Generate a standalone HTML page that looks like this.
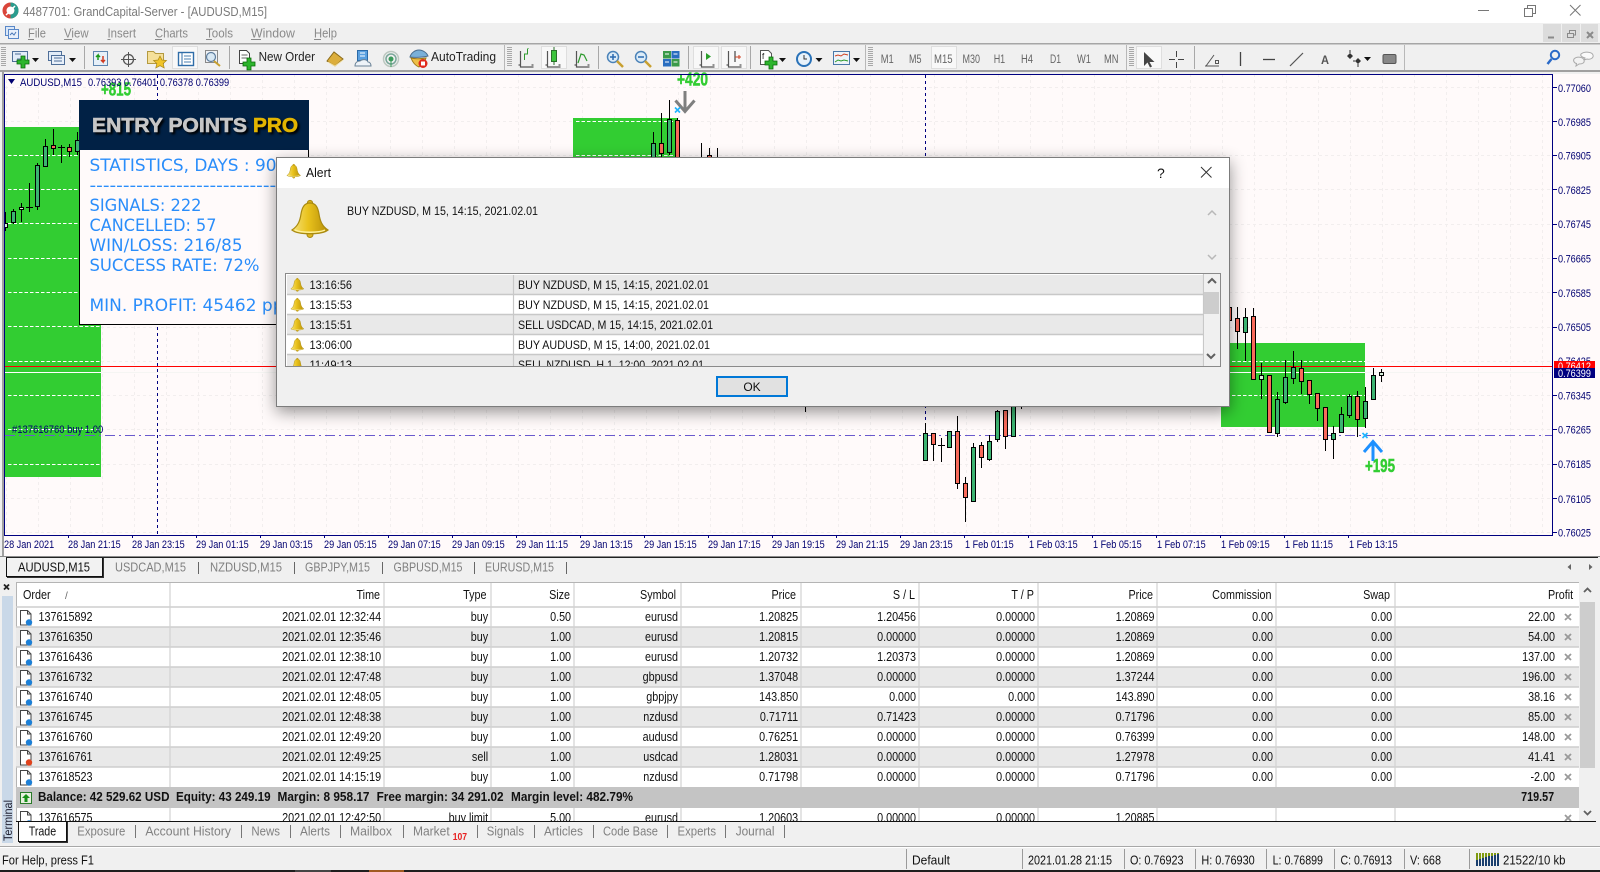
<!DOCTYPE html>
<html><head><meta charset="utf-8"><title>4487701: GrandCapital-Server - [AUDUSD,M15]</title>
<style>
html,body{margin:0;padding:0;background:#f0f0f0;width:1600px;height:872px;overflow:hidden}
svg{position:absolute;left:0;top:0;display:block}
text{font-family:"Liberation Sans",sans-serif;font-size:13px;fill:#111;white-space:pre}
.r{text-anchor:end;transform-box:fill-box;transform-origin:100% 50%;transform:scaleX(.83)}
.l{transform-box:fill-box;transform-origin:0 50%;transform:scaleX(.83)}
.ax{font-size:11px;fill:#000070;transform-box:fill-box;transform-origin:0 50%;transform:scaleX(.83)}
.m{fill:#8a8a8a}
.g{fill:#808080}
.tb{fill:#666}
.p{font-family:"DejaVu Sans",sans-serif;font-size:17px;fill:#2a8dfa}
.pf{font-weight:bold;fill:#32cd32;font-size:18px;stroke:#32cd32;stroke-width:.5px}
.d{font-size:12px;fill:#111}
.h{font-family:"Liberation Sans",sans-serif;font-weight:bold;font-size:20px;stroke-width:.6px}
</style></head>
<body>
<svg width="1600" height="872" viewBox="0 0 1600 872" xmlns="http://www.w3.org/2000/svg">
<defs>
<linearGradient id="bg" x1="0" x2="1" y1="0" y2="0"><stop offset="0" stop-color="#f6e27a"/><stop offset=".45" stop-color="#e9c21c"/><stop offset="1" stop-color="#b78f08"/></linearGradient>
<g id="bell"><circle cx="19" cy="34.5" r="3" fill="#e0b820" stroke="#a98a10"/><circle cx="19" cy="3" r="2.6" fill="#d8b018" stroke="#a98a10"/><path d="M19 3C13 3 11 8 10 14 9 21 7 26 1 30 7 35 31 35 37 30 31 26 29 21 28 14 27 8 25 3 19 3Z" fill="url(#bg)" stroke="#a98a10" stroke-width="1.2"/><path d="M4 30C10 33 28 33 34 30" stroke="#fff3a0" stroke-width="1.4" fill="none"/></g>
<g id="db"><path d="M1.5 .5h7l3.5 3.5v11h-10.500z" fill="#fff" stroke="#444"/><path d="M8.500 .5v3.500h3.500" fill="none" stroke="#444"/><circle cx="10" cy="12.500" r="3.200" fill="#1c7fd6"/></g>
<g id="dr"><path d="M1.5 .5h7l3.5 3.5v11h-10.500z" fill="#fff" stroke="#444"/><path d="M8.500 .5v3.500h3.500" fill="none" stroke="#444"/><circle cx="10" cy="12.500" r="3.200" fill="#e0421c"/></g>
<path id="plus" d="M-2 -6h4v4h4v4h-4v4h-4v-4h-4v-4h4z" fill="#2db52d" stroke="#0a6a0a" stroke-width=".8"/>
<path id="dn" d="M0 0h7l-3.500 4z" fill="#111"/>
<g id="grip"><path d="M0 47.500h5M0 49.500h5M0 51.500h5M0 53.500h5M0 55.500h5M0 57.500h5M0 59.500h5M0 61.500h5M0 63.500h5M0 65.500h5" stroke="#a8a8a8" stroke-width="1"/></g>
<g id="axs"><path d="M0 -8V8H13M-2 6H0M13 6h-2" stroke="#555" fill="none" stroke-width="1.200"/></g>
<pattern id="gv" x="38" y="74" width="32" height="6" patternUnits="userSpaceOnUse"><rect width="1" height="3" fill="#f2eeee"/></pattern>
<filter id="sh" x="-5%" y="-15%" width="110%" height="135%"><feDropShadow dx="0" dy="5" stdDeviation="8" flood-color="#000" flood-opacity=".42"/></filter>
<clipPath id="cc"><rect x="5" y="75" width="1548" height="460"/></clipPath>
<clipPath id="ct"><rect x="16" y="582" width="1563" height="239"/></clipPath>
<clipPath id="cl"><rect x="286" y="274" width="917" height="92"/></clipPath>
<clipPath id="cn"><rect x="1554" y="340" width="46" height="28"/></clipPath>
</defs>

<!-- title bar -->
<rect width="1600" height="23" fill="#fff"/>
<circle cx="10.500" cy="10.500" r="6" fill="none" stroke="#d9453a" stroke-width="4"/>
<path d="M10.500 4.500A6 6 0 0 1 10.500 16.500" fill="none" stroke="#2a9d8f" stroke-width="4"/>
<path d="M6 15L15 6" stroke="#fff" stroke-width="1.500"/>
<text x="23" y="16" textLength="244" lengthAdjust="spacingAndGlyphs" style="fill:#7a7a7a">4487701: GrandCapital-Server - [AUDUSD,M15]</text>
<path d="M1478 10.500H1489" stroke="#777"/>
<path d="M1524.500 8.500h8v8h-8zM1527.500 8.500v-3h8v8h-3" fill="none" stroke="#777"/>
<path d="M1570 5l10.500 10.500M1580.500 5L1570 15.500" stroke="#777"/>

<!-- menu -->
<rect y="23" width="1600" height="20" fill="#f0f0f0"/>
<rect x="5.500" y="26.500" width="9" height="9" fill="#dbe8f8" stroke="#5a88c8"/><rect x="8.500" y="29.500" width="10" height="9" fill="#e8f0fb" stroke="#5a88c8"/><path d="M10 35l2-2 2 2 2-3" stroke="#4a78b8" fill="none"/>
<text class="m" x="28" y="37.500" textLength="18" lengthAdjust="spacingAndGlyphs">File</text>
<text class="m" x="64" y="37.500" textLength="24.600" lengthAdjust="spacingAndGlyphs">View</text>
<text class="m" x="107.500" y="37.500" textLength="28.500" lengthAdjust="spacingAndGlyphs">Insert</text>
<text class="m" x="155" y="37.500" textLength="33" lengthAdjust="spacingAndGlyphs">Charts</text>
<text class="m" x="206" y="37.500" textLength="27" lengthAdjust="spacingAndGlyphs">Tools</text>
<text class="m" x="251" y="37.500" textLength="44" lengthAdjust="spacingAndGlyphs">Window</text>
<text class="m" x="314" y="37.500" textLength="23" lengthAdjust="spacingAndGlyphs">Help</text>
<path d="M28 39.500h6M64 39.500h8M107.500 39.500h3M155 39.500h7M206 39.500h6M251 39.500h10M314 39.500h7" stroke="#8a8a8a"/>
<rect x="1543" y="24" width="18" height="18" fill="#dcdcdc"/><rect x="1562" y="24" width="18" height="18" fill="#dcdcdc"/><rect x="1581" y="24" width="17" height="18" fill="#dcdcdc"/>
<path d="M1548 37.500h6" stroke="#8a8a8a" stroke-width="2"/>
<path d="M1567.500 33.500h6v4h-6zM1569.500 33v-2.500h6v4.500h-2" fill="none" stroke="#8a8a8a"/>
<path d="M1587 32l6 6M1593 32l-6 6" stroke="#8a8a8a" stroke-width="2"/>

<!-- toolbar -->
<rect y="43" width="1600" height="31" fill="#f0f0f0"/>
<rect y="43" width="1600" height="1.500" fill="#a6a6a6"/>
<rect y="70" width="1600" height="2" fill="#a0a0a0"/>
<use href="#grip" x="1"/><use href="#grip" x="507"/><use href="#grip" x="868"/><use href="#grip" x="1129"/>
<path d="M84.500 46v23M229.500 46v23M598.500 46v23M688.500 46v23M750.500 46v23M1194.500 46v23" stroke="#a8a8a8"/>
<path d="M504.500 45v25M865.500 45v25M1126.500 45v25M1404.500 45v25" stroke="#b8b8b8"/>
<!-- active buttons -->
<g fill="#f8f8f8" stroke="#dedede"><rect x="172.500" y="46.500" width="25" height="22"/><rect x="541.500" y="46.500" width="25" height="22"/><rect x="693.500" y="46.500" width="25" height="22"/><rect x="721.500" y="46.500" width="25" height="22"/><rect x="931.500" y="46.500" width="25" height="22"/><rect x="1136.500" y="46.500" width="25" height="22"/></g>
<!-- new chart -->
<rect x="12.500" y="51.500" width="15" height="10" fill="#e2ecf8" stroke="#4e6e98"/><path d="M15 54h6M17 59h7" stroke="#4e6e98"/><use href="#plus" x="23" y="62"/><use href="#dn" x="32" y="58"/>
<rect x="48.500" y="51.500" width="13" height="9" fill="#e2ecf8" stroke="#4e6e98"/><rect x="51.500" y="55.500" width="13" height="9" fill="#e8f0fa" stroke="#4e6e98"/><path d="M54 58h8M54 61h8" stroke="#4e6e98"/><use href="#dn" x="69" y="58"/>
<!-- market watch -->
<rect x="93.500" y="51.500" width="14" height="14" fill="#e6eff8" stroke="#5e86b0"/><path d="M98 60v-5l-2 2M98 55l2 2" stroke="#1a9a1a" stroke-width="1.500" fill="none"/><path d="M103 56v6l-2-2M103 62l2-2" stroke="#d03a20" stroke-width="1.500" fill="none"/>
<!-- crosshair -->
<circle cx="128.500" cy="59.500" r="5" fill="none" stroke="#555" stroke-width="1.300"/><path d="M128.500 52v15M121 59.500h15" stroke="#555"/>
<!-- folder star -->
<path d="M147.500 51.500h6l2 2h8v10h-16z" fill="#f5e09a" stroke="#b49a40"/><path d="M160 56l2 4 4.500.5-3.300 3 1 4.500-4.200-2.300-4.200 2.300 1-4.500-3.300-3 4.500-.5z" fill="#f0c428" stroke="#a8861a" stroke-width=".7"/>
<!-- navigator -->
<rect x="178.500" y="52.500" width="15" height="13" fill="#fff" stroke="#2f6da8" stroke-width="1.400"/><path d="M182 52v13" stroke="#2f6da8"/><path d="M184 56h7M184 59h7M184 62h7" stroke="#4a7fb0"/>
<!-- tester -->
<rect x="205.500" y="50.500" width="12" height="12" fill="#eef1f5" stroke="#8a8a8a"/><circle cx="211" cy="57" r="4.500" fill="#d8e8f4" stroke="#5e7e9e" stroke-width="1.200"/><path d="M214 61l6 5" stroke="#c8a030" stroke-width="2"/>
<!-- new order -->
<path d="M239.500 50.500h7l3 3v10h-10z" fill="#fff" stroke="#444"/><path d="M241.500 55h6M241.500 58h6" stroke="#666"/><use href="#plus" x="249" y="64"/>
<text x="258.600" y="61" textLength="56.400" lengthAdjust="spacingAndGlyphs" style="fill:#222">New Order</text>
<!-- gold -->
<path d="M327 61l7-9 9 7-8 7z" fill="#dcae3c" stroke="#8a6a18"/><path d="M328 62l7 4 8-6" stroke="#f4e0a0" fill="none"/>
<!-- library -->
<path d="M357.500 50.500h10v10h-10z" fill="#5aa0e0" stroke="#2a6aa8"/><path d="M360 53h5M360 56h5" stroke="#fff"/><path d="M355 66c0-4 3-5 5-5 2-2 7-2 8 1 2 0 3 2 3 4z" fill="#eef3f8" stroke="#6a8296"/>
<!-- radio -->
<circle cx="391" cy="59" r="7.500" fill="none" stroke="#bcc8c0" stroke-width="1.500"/><circle cx="391" cy="59" r="5" fill="none" stroke="#7aa69a" stroke-width="1.500"/><circle cx="391" cy="59" r="2.500" fill="#3a9a5a"/><path d="M391 59v8" stroke="#3a9a5a"/>
<!-- autotrading -->
<path d="M410 57c1-4 5-7 9-7s8 3 9 6c-3 1-14 2-18 1z" fill="#7ab0d8" stroke="#4a6e90"/><path d="M411 58c2 5 5 8 8 9l5-4 2-5c-6 1-11 1-15 0z" fill="#eec048" stroke="#a07a18"/><circle cx="423" cy="63.500" r="4.500" fill="#e02a1c"/><rect x="421" y="61.500" width="4" height="4" fill="#fff"/>
<text x="431" y="61" textLength="65" lengthAdjust="spacingAndGlyphs" style="fill:#222">AutoTrading</text>
<!-- chart type -->
<use href="#axs" x="520.500" y="59"/><path d="M524.500 60v-6h3v-5" stroke="#2e9a2e" fill="none"/><path d="M528 49v-1" stroke="#2e9a2e"/>
<use href="#axs" x="547.500" y="59"/><rect x="551.500" y="50.500" width="5" height="11" fill="#3cc43c" stroke="#2a702a"/><path d="M554 47v3M554 62v3" stroke="#2a702a"/>
<use href="#axs" x="576.500" y="59"/><path d="M578 63l3-9 3 1 3 6" stroke="#2e9a2e" fill="none" stroke-width="1.200"/>
<!-- zoom -->
<circle cx="613" cy="57" r="5.500" fill="#dcecf8" stroke="#4a82b8" stroke-width="1.500"/><path d="M610 57h6M613 54v6" stroke="#2a6ab0" stroke-width="1.500"/><path d="M617 61l6 6" stroke="#c8a030" stroke-width="2.500"/>
<circle cx="641" cy="57" r="5.500" fill="#dcecf8" stroke="#4a82b8" stroke-width="1.500"/><path d="M638 57h6" stroke="#2a6ab0" stroke-width="1.500"/><path d="M645 61l6 6" stroke="#c8a030" stroke-width="2.500"/>
<rect x="663" y="51" width="8" height="7.500" fill="#3a9a4a"/><rect x="671.500" y="51" width="8" height="7.500" fill="#2a6ec0"/><rect x="663" y="59" width="8" height="7.500" fill="#2a6ec0"/><rect x="671.500" y="59" width="8" height="7.500" fill="#3a9a4a"/><path d="M665 54h4M673.500 54h4M665 62h4M673.500 62h4" stroke="#fff"/>
<use href="#axs" x="701.500" y="59"/><path d="M706 53v7l5-3.500z" fill="#2aa02a"/>
<use href="#axs" x="728.500" y="59"/><path d="M735 51v11" stroke="#222"/><path d="M735 57h6M739 55v4" stroke="#d04020"/>
<!-- indicators -->
<path d="M760.500 50.500h8l3 3v11h-11z" fill="#fff" stroke="#555"/><text x="762" y="59" style="font-size:8px">f</text><use href="#plus" x="771" y="63"/><use href="#dn" x="779" y="58"/>
<circle cx="804" cy="59" r="7" fill="#e8f2fa" stroke="#2a72b8" stroke-width="2"/><path d="M804 55v4h3" stroke="#333" fill="none"/><use href="#dn" x="815.500" y="58"/>
<rect x="833.500" y="51.500" width="16" height="13" fill="#eef4fa" stroke="#4a78a8"/><path d="M835 56l3-1 3 1 3-2 4 1" stroke="#d04020" fill="none"/><path d="M835 62l3-2 3 1 3-1 4 1" stroke="#2a9a2a" fill="none"/><use href="#dn" x="853" y="58"/>
<g class="tb">
<text class="tb" x="880.700" y="63" textLength="13" lengthAdjust="spacingAndGlyphs" style="font-size:11.500px">M1</text>
<text class="tb" x="909" y="63" textLength="12.500" lengthAdjust="spacingAndGlyphs" style="font-size:11.500px">M5</text>
<text class="tb" x="934" y="63" textLength="18.600" lengthAdjust="spacingAndGlyphs" style="font-size:11.500px">M15</text>
<text class="tb" x="962.500" y="63" textLength="17.500" lengthAdjust="spacingAndGlyphs" style="font-size:11.500px">M30</text>
<text class="tb" x="993.700" y="63" textLength="11.500" lengthAdjust="spacingAndGlyphs" style="font-size:11.500px">H1</text>
<text class="tb" x="1021" y="63" textLength="12" lengthAdjust="spacingAndGlyphs" style="font-size:11.500px">H4</text>
<text class="tb" x="1050" y="63" textLength="11" lengthAdjust="spacingAndGlyphs" style="font-size:11.500px">D1</text>
<text class="tb" x="1077" y="63" textLength="14" lengthAdjust="spacingAndGlyphs" style="font-size:11.500px">W1</text>
<text class="tb" x="1104" y="63" textLength="14.500" lengthAdjust="spacingAndGlyphs" style="font-size:11.500px">MN</text>
</g>
<path d="M1144 52v14l3.500-3.500 2.500 5 2-1-2.500-4.500h5z" fill="#444"/>
<path d="M1176.500 51v6M1176.500 62v6M1169 59.500h6M1178 59.500h6" stroke="#444"/>
<path d="M1205 66h14M1206 66l8-11" stroke="#555" fill="none"/><rect x="1215.500" y="60.500" width="3" height="3" fill="none" stroke="#555"/>
<path d="M1240.500 52v14" stroke="#444" stroke-width="1.300"/>
<path d="M1263 59.500h12" stroke="#444" stroke-width="1.300"/>
<path d="M1290 66l13-13" stroke="#555" stroke-width="1.200"/>
<text x="1321" y="64" textLength="8" lengthAdjust="spacingAndGlyphs" style="font-weight:bold;fill:#555;font-size:12px">A</text>
<path d="M1350 53l3 3-3 3-3-3zM1358 58l3 3-3 3-3-3z" fill="#333"/><path d="M1350 50v3M1358 64v3M1353 61h2" stroke="#333"/><use href="#dn" x="1364" y="57"/>
<rect x="1383" y="54.500" width="13" height="9" rx="1.500" fill="#888" stroke="#555"/>
<circle cx="1555" cy="55" r="4.200" fill="none" stroke="#2a6ac8" stroke-width="2"/><path d="M1551.500 59l-4 5" stroke="#2a6ac8" stroke-width="2.500"/>
<path d="M1581 54c4-3 11-2 12 1 1 3-3 5-6 4l-3 1 1-2c-3-1-5-2-4-4z" fill="#fafafa" stroke="#aaa"/><path d="M1574 59c3-3 9-2 10 1 1 3-2 4-5 4l-3 2 .5-2.500c-2.500-.5-3.500-3-2.500-4.500z" fill="#f2f2f2" stroke="#aaa"/>

<!-- chart frame -->
<rect x="2" y="72" width="2" height="484" fill="#a0a0a0"/>
<rect x="4" y="74" width="1596" height="482" fill="#fffafa"/>
<rect x="5" y="75" width="1548" height="460" fill="url(#gv)"/>
<path d="M5 87.500H1553M5 121.500H1553M5 155.500H1553M5 189.500H1553M5 224.500H1553M5 258.500H1553M5 292.500H1553M5 327.500H1553M5 361.500H1553M5 395.500H1553M5 429.500H1553M5 464.500H1553M5 498.500H1553M5 532.500H1553" stroke="#f2eeee" stroke-dasharray="3 3"/>
<!-- green zones -->
<rect x="5" y="127" width="96" height="350" fill="#32cd32"/>
<rect x="573" y="118" width="104" height="60" fill="#32cd32"/>
<rect x="1221" y="343" width="144" height="84" fill="#32cd32"/>
<path d="M8 155.500H101M8 189.500H101M8 223.500H101M8 258.500H101M8 292.500H101M8 326.500H101M8 361.500H101M8 395.500H101M8 429.500H101M8 464.500H101M576 121.500H677M576 155.500H677M1221 361.500H1365M1221 395.500H1365" stroke="#fff" stroke-dasharray="3.500 2" fill="none"/>
<path d="M5 372.500H1553" stroke="#f5f5f3"/><path d="M5 372.500H101M1221 372.500H1365" stroke="#fff"/>
<!-- verticals -->
<path d="M157.500 75V535M925.500 75V423" stroke="#000080" stroke-dasharray="3 3"/>
<path d="M5 435.500H1553" stroke="#6a5acd" stroke-dasharray="10 4 2 4"/>
<path d="M5 366.500H1553" stroke="#f00"/>

<!-- candles -->
<g clip-path="url(#cc)">
<path stroke="#000" fill="none" d="M5.500 212V231M13.500 209V224M21.500 203V222M29.500 183V212M37.500 163V210M45.500 139V167M53.500 129V155M61.500 145V163M69.500 144V157M77.500 132V155M653.500 132V170M661.500 113V170M669.500 100V155M677.500 118V170M701.500 143V170M709.500 148V170M717.500 148V170M805.500 400V412M925.500 423V460M933.500 433V461M941.500 438V462M949.500 431V448M957.500 416V489M965.500 477V522M973.500 443V501M981.500 442V468M989.500 435V461M997.500 410V442M1005.500 410V449M1013.500 400V436M1021.500 400V409M1229.500 296V320M1237.500 307V349M1245.500 308V361M1253.500 308V380M1261.500 363V399M1269.500 375V433M1277.500 392V437M1285.500 360V404M1293.500 351V384M1301.500 360V394M1309.500 380V404M1317.500 393V421M1325.500 407V451M1333.500 426V459M1341.500 407V432M1349.500 394V418M1357.500 391V437M1365.500 387V428M1373.500 368V399M1381.500 369V382"/>
<path stroke="#000" fill="#3cb371" d="M11.500 211.500h4v11h-4zM35.500 165.500h4v41h-4zM43.500 146.500h4v20h-4zM75.500 140.500h4v11h-4zM651.500 143.500h4v30h-4zM667.500 119.500h4v33h-4zM923.500 433.500h4v27h-4zM947.500 431.500h4v16h-4zM971.500 447.500h4v54h-4zM987.500 441.500h4v18h-4zM995.500 411.500h4v28h-4zM1011.500 400.500h4v36h-4zM1243.500 317.500h4v15h-4zM1275.500 399.500h4v34h-4zM1283.500 377.500h4v25h-4zM1291.500 367.500h4v11h-4zM1331.500 433.500h4v6h-4zM1339.500 414.500h4v18h-4zM1347.500 396.500h4v19h-4zM1363.500 401.500h4v17h-4zM1371.500 375.500h4v24h-4z"/>
<path stroke="#000" fill="#f86a5a" d="M51.500 145.500h4v3h-4zM67.500 147.500h4v4h-4zM659.500 143.500h4v10h-4zM675.500 120.500h4v50h-4zM707.500 155.500h4v15h-4zM931.500 433.500h4v11h-4zM955.500 431.500h4v52h-4zM963.500 483.500h4v14h-4zM979.500 445.500h4v12h-4zM1003.500 410.500h4v26h-4zM1227.500 307.500h4v13h-4zM1235.500 318.500h4v13h-4zM1251.500 316.500h4v63h-4zM1267.500 375.500h4v57h-4zM1299.500 368.500h4v13h-4zM1307.500 380.500h4v14h-4zM1315.500 393.500h4v15h-4zM1323.500 407.500h4v32h-4zM1355.500 396.500h4v23h-4z"/>
<path stroke="#000" fill="#d8f0dc" d="M3.500 223.500h4v4h-4zM19.500 207.500h4v2h-4zM1259.500 375.500h4v4h-4zM1379.500 372.500h4v3h-4z"/>
<path stroke="#000" d="M26 207.500h7M58 147.500h7M938 445.500h7"/>
</g>

<!-- signal marks -->
<path d="M685 91V111M675.500 100.500L685 111.500 694.500 100.500" fill="none" stroke="#7f7f7f" stroke-width="3"/>
<path d="M675 107.500l5 5M680 107.500l-5 5" stroke="#1eb4ff" stroke-width="1.600"/>
<text class="pf" x="677" y="85.500" textLength="31" lengthAdjust="spacingAndGlyphs">+420</text>
<text class="pf" x="101" y="95.500" textLength="30" lengthAdjust="spacingAndGlyphs">+815</text>
<path d="M1373 461V442M1364 452L1373 441.500 1382 452" fill="none" stroke="#1e90ff" stroke-width="3"/>
<path d="M1362.500 433l5 5M1367.500 433l-5 5" stroke="#1eb4ff" stroke-width="1.600"/>
<text class="pf" x="1365" y="472" textLength="30" lengthAdjust="spacingAndGlyphs">+195</text>

<!-- chart text -->
<path d="M8 79h7l-3.500 5z" fill="#000070"/>
<text x="20" y="86" textLength="62" lengthAdjust="spacingAndGlyphs" style="font-size:11px;fill:#000070">AUDUSD,M15</text>
<text class="ax" x="88" y="86" textLength="170" lengthAdjust="spacingAndGlyphs">0.76393 0.76401 0.76378 0.76399</text>
<text class="ax" x="12" y="433" textLength="110" lengthAdjust="spacingAndGlyphs">#137616760 buy 1.00</text>

<!-- axes -->
<path d="M4.500 74V535M4 74.500H1553M1552.500 74V535M4 535.500H1553" fill="none" stroke="#000080"/>
<path d="M1553 87.500h4M1553 121.500h4M1553 155.500h4M1553 189.500h4M1553 224.500h4M1553 258.500h4M1553 292.500h4M1553 327.500h4M1553 395.500h4M1553 429.500h4M1553 464.500h4M1553 498.500h4M1553 532.500h4M68.500 535v3M132.500 535v3M196.500 535v3M260.500 535v3M324.500 535v3M388.500 535v3M452.500 535v3M516.500 535v3M580.500 535v3M644.500 535v3M708.500 535v3M772.500 535v3M836.500 535v3M900.500 535v3M964.500 535v3M1028.500 535v3M1092.500 535v3M1156.500 535v3M1220.500 535v3M1284.500 535v3M1348.500 535v3" stroke="#000080"/>
<text class="ax" x="1558" y="92">0.77060</text><text class="ax" x="1558" y="126">0.76985</text><text class="ax" x="1558" y="159.500">0.76905</text><text class="ax" x="1558" y="194">0.76825</text><text class="ax" x="1558" y="228">0.76745</text><text class="ax" x="1558" y="262.500">0.76665</text><text class="ax" x="1558" y="297">0.76585</text><text class="ax" x="1558" y="331">0.76505</text><text class="ax" x="1558" y="365">0.76425</text><text class="ax" x="1558" y="399.500">0.76345</text><text class="ax" x="1558" y="433.500">0.76265</text><text class="ax" x="1558" y="468">0.76185</text><text class="ax" x="1558" y="503">0.76105</text><text class="ax" x="1558" y="536.500">0.76025</text>
<rect x="1554" y="361" width="41" height="8" fill="#f00"/>
<g clip-path="url(#cn)"><text class="ax" x="1558" y="370" style="fill:#fff">0.76412</text></g>
<rect x="1554" y="368" width="41" height="10" fill="#000080"/>
<text class="ax" x="1558" y="377" style="fill:#fff">0.76399</text>
<g>
<text class="ax" x="4" y="548">28 Jan 2021</text><text class="ax" x="68" y="548">28 Jan 21:15</text><text class="ax" x="132" y="548">28 Jan 23:15</text><text class="ax" x="196" y="548">29 Jan 01:15</text><text class="ax" x="260" y="548">29 Jan 03:15</text><text class="ax" x="324" y="548">29 Jan 05:15</text><text class="ax" x="388" y="548">29 Jan 07:15</text><text class="ax" x="452" y="548">29 Jan 09:15</text><text class="ax" x="516" y="548">29 Jan 11:15</text><text class="ax" x="580" y="548">29 Jan 13:15</text><text class="ax" x="644" y="548">29 Jan 15:15</text><text class="ax" x="708" y="548">29 Jan 17:15</text><text class="ax" x="772" y="548">29 Jan 19:15</text><text class="ax" x="836" y="548">29 Jan 21:15</text><text class="ax" x="900" y="548">29 Jan 23:15</text><text class="ax" x="965" y="548">1 Feb 01:15</text><text class="ax" x="1029" y="548">1 Feb 03:15</text><text class="ax" x="1093" y="548">1 Feb 05:15</text><text class="ax" x="1157" y="548">1 Feb 07:15</text><text class="ax" x="1221" y="548">1 Feb 09:15</text><text class="ax" x="1285" y="548">1 Feb 11:15</text><text class="ax" x="1349" y="548">1 Feb 13:15</text>
</g>

<!-- entry points panel -->
<rect x="79.500" y="100.500" width="229" height="224" fill="#fffafa" stroke="#000"/>
<rect x="79" y="100" width="230" height="50" fill="#012145"/>
<text class="h" x="92" y="132" textLength="155" lengthAdjust="spacingAndGlyphs" style="fill:#c6c6c6;stroke:#c6c6c6;filter:drop-shadow(2px 2px 1px #000)">ENTRY POINTS</text>
<text class="h" x="253" y="132" textLength="45" lengthAdjust="spacingAndGlyphs" style="fill:#e2b400;stroke:#e2b400;filter:drop-shadow(2px 2px 1px #000)">PRO</text>
<text class="p" x="89.500" y="171" textLength="187" lengthAdjust="spacingAndGlyphs">STATISTICS, DAYS : 90</text>
<text class="p" x="89.500" y="191" textLength="200" lengthAdjust="spacingAndGlyphs">------------------------------</text>
<text class="p" x="89.500" y="211" textLength="112" lengthAdjust="spacingAndGlyphs">SIGNALS: 222</text>
<text class="p" x="89.500" y="231" textLength="127" lengthAdjust="spacingAndGlyphs">CANCELLED: 57</text>
<text class="p" x="89.500" y="251" textLength="153" lengthAdjust="spacingAndGlyphs">WIN/LOSS: 216/85</text>
<text class="p" x="89.500" y="271" textLength="170" lengthAdjust="spacingAndGlyphs">SUCCESS RATE: 72%</text>
<text class="p" x="89.500" y="311" textLength="194" lengthAdjust="spacingAndGlyphs">MIN. PROFIT: 45462 pp</text>

<!-- alert dialog -->
<rect x="276.500" y="157.500" width="953" height="249" fill="#f0f0f0" stroke="#7c7c7c" filter="url(#sh)"/>
<rect x="277" y="158" width="952" height="30" fill="#fff"/>
<use href="#bell" transform="translate(286.500 164) scale(.38)"/>
<text x="306" y="177" textLength="25" lengthAdjust="spacingAndGlyphs">Alert</text>
<text x="1157" y="178" style="font-size:14px">?</text>
<path d="M1201 167l10.500 10.500M1211.500 167L1201 177.500" stroke="#333"/>
<use href="#bell" x="291" y="200"/>
<text class="d" x="347" y="215" textLength="191" lengthAdjust="spacingAndGlyphs">BUY NZDUSD, M 15, 14:15, 2021.02.01</text>
<path d="M1208 215l4-4 4 4M1208 255l4 4 4-4" fill="none" stroke="#b8b8b8" stroke-width="1.500"/>
<!-- list -->
<rect x="285.500" y="273.500" width="935" height="93" fill="#fff" stroke="#8a8a8a"/>
<rect x="287" y="275" width="916" height="19" fill="#e9e9e9"/><rect x="287" y="315" width="916" height="19" fill="#e9e9e9"/><rect x="287" y="355" width="916" height="11" fill="#e9e9e9"/>
<path d="M287 294.500H1203M287 314.500H1203M287 334.500H1203M287 354.500H1203" stroke="#c8c8c8" stroke-width="1.500"/>
<path d="M513.500 275V366M1203.500 274V366" stroke="#c8c8c8" stroke-width="1.200"/>
<rect x="1204" y="274" width="16" height="92" fill="#f0f0f0"/>
<rect x="1204" y="292" width="15" height="22" fill="#cdcdcd"/>
<path d="M1208 283l4-4 4 4M1207 354l4 4 4-4" fill="none" stroke="#606060" stroke-width="2"/>
<g clip-path="url(#cl)">
<use href="#bell" transform="translate(290.500 278) scale(.36)"/><use href="#bell" transform="translate(290.500 298) scale(.36)"/><use href="#bell" transform="translate(290.500 318) scale(.36)"/><use href="#bell" transform="translate(290.500 338) scale(.36)"/><use href="#bell" transform="translate(290.500 358) scale(.36)"/>
<text class="d" x="309.500" y="289" textLength="42.500" lengthAdjust="spacingAndGlyphs">13:16:56</text>
<text class="d" x="309.500" y="309" textLength="42.500" lengthAdjust="spacingAndGlyphs">13:15:53</text>
<text class="d" x="309.500" y="329" textLength="42.500" lengthAdjust="spacingAndGlyphs">13:15:51</text>
<text class="d" x="309.500" y="349" textLength="42.500" lengthAdjust="spacingAndGlyphs">13:06:00</text>
<text class="d" x="309.500" y="369" textLength="42.500" lengthAdjust="spacingAndGlyphs">11:49:13</text>
<text class="d" x="518" y="289" textLength="191" lengthAdjust="spacingAndGlyphs">BUY NZDUSD, M 15, 14:15, 2021.02.01</text>
<text class="d" x="518" y="309" textLength="191" lengthAdjust="spacingAndGlyphs">BUY NZDUSD, M 15, 14:15, 2021.02.01</text>
<text class="d" x="518" y="329" textLength="195" lengthAdjust="spacingAndGlyphs">SELL USDCAD, M 15, 14:15, 2021.02.01</text>
<text class="d" x="518" y="349" textLength="192" lengthAdjust="spacingAndGlyphs">BUY AUDUSD, M 15, 14:00, 2021.02.01</text>
<text class="d" x="518" y="369" textLength="186" lengthAdjust="spacingAndGlyphs">SELL NZDUSD, H 1, 12:00, 2021.02.01</text>
</g>
<rect x="717" y="377" width="70" height="19" fill="#e1e1e1" stroke="#0078d7" stroke-width="2"/>
<text class="d" x="752" y="391" text-anchor="middle">OK</text>

<!-- chart tabs -->
<rect y="556" width="1600" height="1.500" fill="#8c8c8c"/>
<rect y="557" width="1600" height="25" fill="#f0f0f0"/>
<path d="M6 557.500H1598" stroke="#222"/>
<path d="M6.500 558V576.500H102.500V558" fill="#f2f2f2" stroke="#111"/><path d="M7 577.500H103.500V558" fill="none" stroke="#333"/>
<text x="18" y="571.500" textLength="72" lengthAdjust="spacingAndGlyphs">AUDUSD,M15</text>
<g class="g">
<text class="g" x="115" y="571.500" textLength="71" lengthAdjust="spacingAndGlyphs">USDCAD,M15</text>
<text class="g" x="210" y="571.500" textLength="72" lengthAdjust="spacingAndGlyphs">NZDUSD,M15</text>
<text class="g" x="305" y="571.500" textLength="65" lengthAdjust="spacingAndGlyphs">GBPJPY,M15</text>
<text class="g" x="393.500" y="571.500" textLength="69" lengthAdjust="spacingAndGlyphs">GBPUSD,M15</text>
<text class="g" x="485" y="571.500" textLength="69" lengthAdjust="spacingAndGlyphs">EURUSD,M15</text>
</g>
<path d="M198.500 562v12M294.500 562v12M382.500 562v12M474.500 562v12M566.500 562v12" stroke="#666"/>
<path d="M1571 564v6l-3.500-3zM1589 564v6l3.500-3z" fill="#666"/>

<!-- terminal -->
<rect y="578" width="16" height="270" fill="#f0f0f0"/>
<path d="M4 584.500l5 5M9 584.500l-5 5" stroke="#222" stroke-width="1.800"/>
<rect x="2" y="596" width="11" height="247" fill="#c9d8e8"/>
<text transform="translate(12 841) rotate(-90)" textLength="41" lengthAdjust="spacingAndGlyphs" style="font-size:12px;fill:#223">Terminal</text>

<!-- table -->
<rect x="16" y="582" width="1563" height="239" fill="#fff"/>
<path d="M16 582.500H1579" stroke="#b4b4b4"/><path d="M16.500 582V821" stroke="#b4b4b4"/>
<rect x="16" y="627" width="1563" height="20" fill="#e9e9e9"/><rect x="16" y="667" width="1563" height="20" fill="#e9e9e9"/><rect x="16" y="707" width="1563" height="20" fill="#e9e9e9"/><rect x="16" y="747" width="1563" height="20" fill="#e9e9e9"/>
<path d="M16 607H1579M16 627H1579M16 647H1579M16 667H1579M16 687H1579M16 707H1579M16 727H1579M16 747H1579M16 767H1579" stroke="#cecece" stroke-width="1.500"/>
<path d="M170 583V787M384 583V787M491 583V787M574 583V787M681 583V787M801 583V787M919 583V787M1038 583V787M1157 583V787M1276 583V787M1395 583V787M170 808V821M384 808V821M491 808V821M574 808V821M681 808V821M801 808V821M919 808V821M1038 808V821M1157 808V821M1276 808V821M1395 808V821" stroke="#d2d2d2" stroke-width="1.200"/>
<rect x="16" y="787" width="1563" height="21" fill="#c4c4c4"/>
<text class="l" x="23" y="599">Order</text><text x="65" y="599" style="font-size:10px;fill:#666">/</text>
<text class="r" x="380" y="599">Time</text><text class="r" x="486.500" y="599">Type</text><text class="r" x="570" y="599">Size</text><text class="r" x="676" y="599">Symbol</text><text class="r" x="796" y="599">Price</text><text class="r" x="915" y="599">S / L</text><text class="r" x="1034" y="599">T / P</text><text class="r" x="1153" y="599">Price</text><text class="r" x="1271.500" y="599">Commission</text><text class="r" x="1390" y="599">Swap</text><text class="r" x="1573" y="599">Profit</text>
<g clip-path="url(#ct)">
<use href="#db" x="19" y="610"/><use href="#db" x="19" y="630"/><use href="#db" x="19" y="650"/><use href="#db" x="19" y="670"/><use href="#db" x="19" y="690"/><use href="#db" x="19" y="710"/><use href="#db" x="19" y="730"/><use href="#dr" x="19" y="750"/><use href="#db" x="19" y="770"/><use href="#db" x="19" y="811"/>
<text class="l" y="621"><tspan x="38.500">137615892</tspan><tspan x="38.500" dy="20">137616350</tspan><tspan x="38.500" dy="20">137616436</tspan><tspan x="38.500" dy="20">137616732</tspan><tspan x="38.500" dy="20">137616740</tspan><tspan x="38.500" dy="20">137616745</tspan><tspan x="38.500" dy="20">137616760</tspan><tspan x="38.500" dy="20">137616761</tspan><tspan x="38.500" dy="20">137618523</tspan><tspan x="38.500" dy="41">137616575</tspan></text>
<text class="r" y="621"><tspan x="381">2021.02.01 12:32:44</tspan><tspan x="381" dy="20">2021.02.01 12:35:46</tspan><tspan x="381" dy="20">2021.02.01 12:38:10</tspan><tspan x="381" dy="20">2021.02.01 12:47:48</tspan><tspan x="381" dy="20">2021.02.01 12:48:05</tspan><tspan x="381" dy="20">2021.02.01 12:48:38</tspan><tspan x="381" dy="20">2021.02.01 12:49:20</tspan><tspan x="381" dy="20">2021.02.01 12:49:25</tspan><tspan x="381" dy="20">2021.02.01 14:15:19</tspan><tspan x="381" dy="41">2021.02.01 12:42:50</tspan></text>
<text class="r" y="621"><tspan x="488">buy</tspan><tspan x="488" dy="20">buy</tspan><tspan x="488" dy="20">buy</tspan><tspan x="488" dy="20">buy</tspan><tspan x="488" dy="20">buy</tspan><tspan x="488" dy="20">buy</tspan><tspan x="488" dy="20">buy</tspan><tspan x="488" dy="20">sell</tspan><tspan x="488" dy="20">buy</tspan><tspan x="488" dy="41">buy limit</tspan></text>
<text class="r" y="621"><tspan x="571">0.50</tspan><tspan x="571" dy="20">1.00</tspan><tspan x="571" dy="20">1.00</tspan><tspan x="571" dy="20">1.00</tspan><tspan x="571" dy="20">1.00</tspan><tspan x="571" dy="20">1.00</tspan><tspan x="571" dy="20">1.00</tspan><tspan x="571" dy="20">1.00</tspan><tspan x="571" dy="20">1.00</tspan><tspan x="571" dy="41">5.00</tspan></text>
<text class="r" y="621"><tspan x="678">eurusd</tspan><tspan x="678" dy="20">eurusd</tspan><tspan x="678" dy="20">eurusd</tspan><tspan x="678" dy="20">gbpusd</tspan><tspan x="678" dy="20">gbpjpy</tspan><tspan x="678" dy="20">nzdusd</tspan><tspan x="678" dy="20">audusd</tspan><tspan x="678" dy="20">usdcad</tspan><tspan x="678" dy="20">nzdusd</tspan><tspan x="678" dy="41">eurusd</tspan></text>
<text class="r" y="621"><tspan x="798">1.20825</tspan><tspan x="798" dy="20">1.20815</tspan><tspan x="798" dy="20">1.20732</tspan><tspan x="798" dy="20">1.37048</tspan><tspan x="798" dy="20">143.850</tspan><tspan x="798" dy="20">0.71711</tspan><tspan x="798" dy="20">0.76251</tspan><tspan x="798" dy="20">1.28031</tspan><tspan x="798" dy="20">0.71798</tspan><tspan x="798" dy="41">1.20603</tspan></text>
<text class="r" y="621"><tspan x="916">1.20456</tspan><tspan x="916" dy="20">0.00000</tspan><tspan x="916" dy="20">1.20373</tspan><tspan x="916" dy="20">0.00000</tspan><tspan x="916" dy="20">0.000</tspan><tspan x="916" dy="20">0.71423</tspan><tspan x="916" dy="20">0.00000</tspan><tspan x="916" dy="20">0.00000</tspan><tspan x="916" dy="20">0.00000</tspan><tspan x="916" dy="41">0.00000</tspan></text>
<text class="r" y="621"><tspan x="1035">0.00000</tspan><tspan x="1035" dy="20">0.00000</tspan><tspan x="1035" dy="20">0.00000</tspan><tspan x="1035" dy="20">0.00000</tspan><tspan x="1035" dy="20">0.000</tspan><tspan x="1035" dy="20">0.00000</tspan><tspan x="1035" dy="20">0.00000</tspan><tspan x="1035" dy="20">0.00000</tspan><tspan x="1035" dy="20">0.00000</tspan><tspan x="1035" dy="41">0.00000</tspan></text>
<text class="r" y="621"><tspan x="1154.500">1.20869</tspan><tspan x="1154.500" dy="20">1.20869</tspan><tspan x="1154.500" dy="20">1.20869</tspan><tspan x="1154.500" dy="20">1.37244</tspan><tspan x="1154.500" dy="20">143.890</tspan><tspan x="1154.500" dy="20">0.71796</tspan><tspan x="1154.500" dy="20">0.76399</tspan><tspan x="1154.500" dy="20">1.27978</tspan><tspan x="1154.500" dy="20">0.71796</tspan><tspan x="1154.500" dy="41">1.20885</tspan></text>
<text class="r" y="621"><tspan x="1273">0.00</tspan><tspan x="1273" dy="20">0.00</tspan><tspan x="1273" dy="20">0.00</tspan><tspan x="1273" dy="20">0.00</tspan><tspan x="1273" dy="20">0.00</tspan><tspan x="1273" dy="20">0.00</tspan><tspan x="1273" dy="20">0.00</tspan><tspan x="1273" dy="20">0.00</tspan><tspan x="1273" dy="20">0.00</tspan></text>
<text class="r" y="621"><tspan x="1392">0.00</tspan><tspan x="1392" dy="20">0.00</tspan><tspan x="1392" dy="20">0.00</tspan><tspan x="1392" dy="20">0.00</tspan><tspan x="1392" dy="20">0.00</tspan><tspan x="1392" dy="20">0.00</tspan><tspan x="1392" dy="20">0.00</tspan><tspan x="1392" dy="20">0.00</tspan><tspan x="1392" dy="20">0.00</tspan></text>
<text class="r" y="621"><tspan x="1555">22.00</tspan><tspan x="1555" dy="20">54.00</tspan><tspan x="1555" dy="20">137.00</tspan><tspan x="1555" dy="20">196.00</tspan><tspan x="1555" dy="20">38.16</tspan><tspan x="1555" dy="20">85.00</tspan><tspan x="1555" dy="20">148.00</tspan><tspan x="1555" dy="20">41.41</tspan><tspan x="1555" dy="20">-2.00</tspan></text>
<path d="M1565 614l6 6M1571 614l-6 6M1565 634l6 6M1571 634l-6 6M1565 654l6 6M1571 654l-6 6M1565 674l6 6M1571 674l-6 6M1565 694l6 6M1571 694l-6 6M1565 714l6 6M1571 714l-6 6M1565 734l6 6M1571 734l-6 6M1565 754l6 6M1571 754l-6 6M1565 774l6 6M1571 774l-6 6M1565 815l6 6M1571 815l-6 6" stroke="#9a9a9a" stroke-width="1.800"/>
</g>
<!-- balance -->
<rect x="20.500" y="792.500" width="11" height="11" fill="#e8f0e0" stroke="#2a7a2a"/><path d="M26 794l4 4h-2.500v4h-3v-4H22z" fill="#189018"/>
<g style="font-weight:bold">
<text x="38" y="801" textLength="131.500" lengthAdjust="spacingAndGlyphs" style="font-weight:bold">Balance: 42 529.62 USD</text>
<text x="176" y="801" textLength="94.600" lengthAdjust="spacingAndGlyphs" style="font-weight:bold">Equity: 43 249.19</text>
<text x="277.500" y="801" textLength="92" lengthAdjust="spacingAndGlyphs" style="font-weight:bold">Margin: 8 958.17</text>
<text x="376.600" y="801" textLength="127" lengthAdjust="spacingAndGlyphs" style="font-weight:bold">Free margin: 34 291.02</text>
<text x="511" y="801" textLength="122" lengthAdjust="spacingAndGlyphs" style="font-weight:bold">Margin level: 482.79%</text>
<text class="r" x="1554" y="801" style="font-weight:bold">719.57</text>
</g>
<!-- table scrollbar -->
<rect x="1579" y="582" width="17" height="239" fill="#f0f0f0"/>
<rect x="1580" y="602" width="15" height="166" fill="#cdcdcd"/>
<path d="M1584 592l3.500-3.500 3.500 3.500M1584 811l3.500 3.500 3.500-3.500" fill="none" stroke="#606060" stroke-width="1.800"/>

<!-- bottom tabs -->
<rect x="16" y="821" width="1584" height="26" fill="#f0f0f0"/>
<path d="M16 821.500H1596" stroke="#111"/>
<path d="M18.500 822V841.500H66.500V822" fill="#fff" stroke="#111"/><path d="M19 842.500H67.500V822" fill="none" stroke="#333"/>
<text x="28.700" y="835.500" textLength="27.500" lengthAdjust="spacingAndGlyphs">Trade</text>
<text class="g" x="77.300" y="835.500" textLength="48" lengthAdjust="spacingAndGlyphs">Exposure</text>
<text class="g" x="145.400" y="835.500" textLength="85.600" lengthAdjust="spacingAndGlyphs">Account History</text>
<text class="g" x="251.400" y="835.500" textLength="28.600" lengthAdjust="spacingAndGlyphs">News</text>
<text class="g" x="300" y="835.500" textLength="30" lengthAdjust="spacingAndGlyphs">Alerts</text>
<text class="g" x="350" y="835.500" textLength="42" lengthAdjust="spacingAndGlyphs">Mailbox</text>
<text class="g" x="413" y="835.500" textLength="36.700" lengthAdjust="spacingAndGlyphs">Market</text>
<text x="452.700" y="840" textLength="14.300" lengthAdjust="spacingAndGlyphs" style="font-size:10px;font-weight:bold;fill:#e82020">107</text>
<text class="g" x="486.800" y="835.500" textLength="37.200" lengthAdjust="spacingAndGlyphs">Signals</text>
<text class="g" x="544" y="835.500" textLength="39" lengthAdjust="spacingAndGlyphs">Articles</text>
<text class="g" x="603" y="835.500" textLength="55" lengthAdjust="spacingAndGlyphs">Code Base</text>
<text class="g" x="677.500" y="835.500" textLength="38.500" lengthAdjust="spacingAndGlyphs">Experts</text>
<text class="g" x="735.700" y="835.500" textLength="38.800" lengthAdjust="spacingAndGlyphs">Journal</text>
<path d="M135.500 825v13M241.500 825v13M290.500 825v13M340.500 825v13M403.500 825v13M477.500 825v13M534.500 825v13M593.500 825v13M667.500 825v13M725.500 825v13M784.500 825v13" stroke="#777"/>

<!-- status bar -->
<rect y="847" width="1600" height="23" fill="#f0f0f0"/>
<path d="M0 846.500H1600" stroke="#a8a8a8"/><path d="M0 847.500H1600" stroke="#fff"/>
<text x="2" y="864.500" textLength="92" lengthAdjust="spacingAndGlyphs">For Help, press F1</text>
<path d="M906.500 849v20M1022.500 849v20M1124.500 849v20M1195.500 849v20M1266.500 849v20M1334.500 849v20M1404.500 849v20M1469.500 849v20" stroke="#9a9a9a"/>
<text x="912" y="864.500" textLength="38" lengthAdjust="spacingAndGlyphs">Default</text>
<text x="1028" y="864.500" textLength="84" lengthAdjust="spacingAndGlyphs">2021.01.28 21:15</text>
<text x="1130" y="864.500" textLength="53.500" lengthAdjust="spacingAndGlyphs">O: 0.76923</text>
<text x="1201.400" y="864.500" textLength="53.300" lengthAdjust="spacingAndGlyphs">H: 0.76930</text>
<text x="1272.600" y="864.500" textLength="50.400" lengthAdjust="spacingAndGlyphs">L: 0.76899</text>
<text x="1340.500" y="864.500" textLength="51.500" lengthAdjust="spacingAndGlyphs">C: 0.76913</text>
<text x="1410" y="864.500" textLength="31" lengthAdjust="spacingAndGlyphs">V: 668</text>
<path d="M1477 866v-6M1480 866v-7M1483 866v-8M1486 866v-9M1489 866v-10M1492 866v-10M1495 866v-11M1498 866v-12" stroke="#1a3f6e" stroke-width="2"/>
<path d="M1477 860v-7M1480 859v-6M1483 858v-5M1486 857v-4M1489 856v-3M1492 856v-3M1495 855v-2M1498 854v-1" stroke="#7f9a10" stroke-width="2"/>
<text x="1503" y="864.500" textLength="62.500" lengthAdjust="spacingAndGlyphs">21522/10 kb</text>

<!-- bottom strip -->
<rect y="870" width="1600" height="2" fill="#1e1e1e"/>
<rect x="295" y="870" width="36" height="2" fill="#444"/>
<rect x="369" y="870" width="35" height="2" fill="#a05a20"/>
</svg>
</body></html>
